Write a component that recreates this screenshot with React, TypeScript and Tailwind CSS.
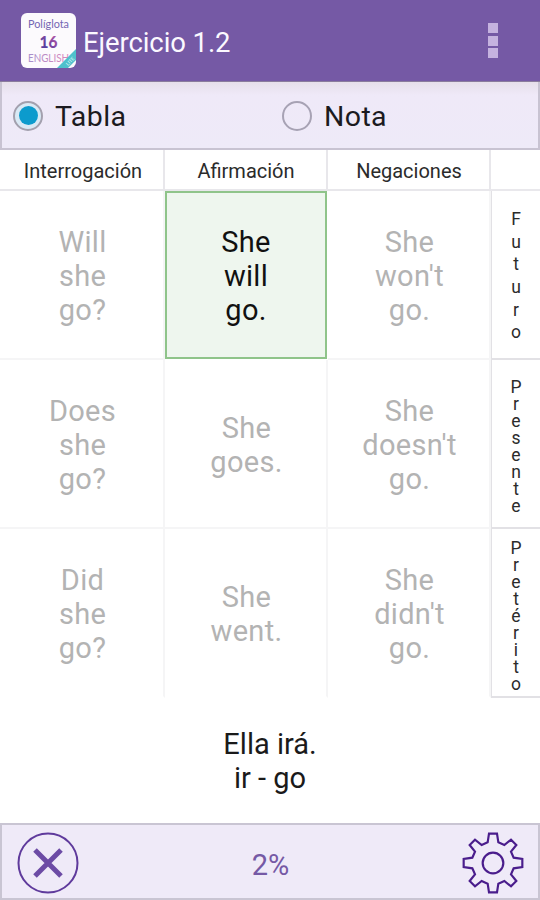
import clsx from 'clsx';

const HEADERS = ['Interrogación', 'Afirmación', 'Negaciones'];

const ROWS = [
  {
    tense: 'Futuro',
    step: 'leading-[22.6px] pt-[3px]',
    cells: [['Will', 'she', 'go?'], ['She', 'will', 'go.'], ['She', "won't", 'go.']],
  },
  {
    tense: 'Presente',
    step: 'leading-[17px] pt-[7px]',
    cells: [['Does', 'she', 'go?'], ['She', 'goes.'], ['She', "doesn't", 'go.']],
  },
  {
    tense: 'Pretérito',
    step: 'leading-[17px] pt-[7px]',
    cells: [['Did', 'she', 'go?'], ['She', 'went.'], ['She', "didn't", 'go.']],
  },
];

function AppLogo() {
  return (
    <svg className="w-[55px] h-[55px]" viewBox="0 0 55 55" fontFamily="Lato, Roboto, sans-serif" aria-hidden="true">
      <defs>
        <linearGradient id="num" x1="0" y1="1" x2="1" y2="0">
          <stop offset="0.3" stopColor="#5a3f9f" />
          <stop offset="1" stopColor="#d05aa8" />
        </linearGradient>
        <linearGradient id="lang" x1="0" x2="1">
          <stop offset="0" stopColor="#a58fcb" />
          <stop offset="1" stopColor="#dc85bb" />
        </linearGradient>
        <clipPath id="tile">
          <rect width="55" height="55" rx="6" />
        </clipPath>
      </defs>
      <g clipPath="url(#tile)">
        <rect width="55" height="55" fill="#fcfafd" />
        <text x="27.5" y="14.5" fontSize="11" textAnchor="middle" textLength="41" lengthAdjust="spacingAndGlyphs" fill="#7466b3">Políglota</text>
        <text x="27.5" y="34.5" fontSize="17" fontWeight="900" textAnchor="middle" textLength="18" lengthAdjust="spacingAndGlyphs" fill="url(#num)">16</text>
        <text x="27.5" y="49" fontSize="12" textAnchor="middle" textLength="41" lengthAdjust="spacingAndGlyphs" fill="url(#lang)">ENGLISH</text>
        <path d="M36 55 L55 36 V47 L47 55 Z" fill="#4fc0cc" />
        <text x="49" y="50" fontSize="5" textAnchor="middle" transform="rotate(-45 49 48)" fill="#d9f5f7">LITE</text>
      </g>
    </svg>
  );
}

function Radio({ label, checked }: { label: string; checked?: boolean }) {
  return (
    <label className="flex w-[269px] shrink-0 items-center">
      <span
        className={clsx(
          'flex h-[30px] w-[30px] items-center justify-center rounded-full border-2',
          checked ? 'border-[#a3a0ae] bg-[#d9e9f5]' : 'border-[#a7a2b4]'
        )}
      >
        {checked && <span className="h-[19px] w-[19px] rounded-full bg-[#0c9bcd]" />}
      </span>
      <span className="ml-3 pt-[3px] text-[28.5px] leading-none tracking-[0.4px] text-[#1b1a20]">{label}</span>
    </label>
  );
}

function CloseIcon() {
  return (
    <svg className="w-[62px] h-[62px]" viewBox="0 0 62 62" fill="none">
      <circle cx="31" cy="31" r="29.5" stroke="#5f3a9c" strokeWidth="2" />
      <path d="M18 18 L44 44 M44 18 L18 44" stroke="#6c4ba5" strokeWidth="5" />
    </svg>
  );
}

function GearIcon() {
  return (
    <svg className="w-[62px] h-[62px]" viewBox="-93 -93 186 186" fill="none" stroke="#4a1d8c" strokeWidth="6.5">
      <path d="M-12 -88 L12 -88 L16 -62 L34 -54 L54 -70 L70 -54 L54 -34 L62 -16 L88 -12 L88 12 L62 16 L54 34 L70 54 L54 70 L34 54 L16 62 L12 88 L-12 88 L-16 62 L-34 54 L-54 70 L-70 54 L-54 34 L-62 16 L-88 12 L-88 -12 L-62 -16 L-54 -34 L-70 -54 L-54 -70 L-34 -54 L-16 -62 Z" />
      <circle r="31" />
    </svg>
  );
}

export default function App() {
  return (
    <div className="flex h-[900px] w-[540px] flex-col overflow-hidden bg-white font-[Roboto,sans-serif]">
      {/* Action bar */}
      <header className="flex h-[82px] shrink-0 items-center border-b border-[#8a7c9c] bg-[#7559a5] pl-[21px] pr-[42px]">
        <AppLogo />
        <h1 className="ml-[7px] flex-1 pt-[4px] text-[27.5px] leading-none tracking-[-0.1px] text-[#fbf8ff]">Ejercicio 1.2</h1>
        <button className="flex flex-col gap-[2.5px]" aria-label="Menú">
          <span className="h-[10px] w-[10px] bg-[#c5b2df]" />
          <span className="h-[10px] w-[10px] bg-[#c5b2df]" />
          <span className="h-[10px] w-[10px] bg-[#c5b2df]" />
        </button>
      </header>

      {/* Mode */}
      <div className="flex h-[68px] shrink-0 items-center overflow-hidden border-x-2 border-b-2 border-[#c8c3d2] bg-linear-to-b from-[#e6dfea] via-[#efe9f8] via-20% to-[#eeeaf8] pl-[11px] pt-px">
        <Radio label="Tabla" checked />
        <Radio label="Nota" />
      </div>

      {/* Table */}
      <div className="grid shrink-0 grid-cols-[165px_163px_163px_49px] grid-rows-[41px_169px_169px_169px]">
        {HEADERS.map((h) => (
          <div key={h} className="flex items-center justify-center border-b-2 border-r-2 border-[#e8e7eb] pl-px pt-[3px] text-[20px] text-[#2b2b2b] first:pl-[3px]">
            {h}
          </div>
        ))}
        <div className="border-b-2 border-[#e9e8ec]" />

        {ROWS.map((row, r) => [
          ...row.cells.map((lines, c) => {
            const active = r === 0 && c === 1;
            return (
              <div
                key={`${row.tense}-${c}`}
                className={clsx(
                  'flex flex-col items-center justify-center text-[29px] leading-[34px] tracking-[0.3px]',
                  active
                    ? 'mb-px mr-px border-2 border-[#8fc48a] bg-[#eef6ee] pt-px text-[#111]'
                    : 'border-b-2 border-r-2 border-[#f5f5f6] pl-[2px] pt-[3px] text-[#b3b3b3]',
                  r === 2 && 'border-b-transparent'
                )}
              >
                {lines.map((line) => (
                  <span key={line}>{line}</span>
                ))}
              </div>
            );
          }),
          <div
            key={row.tense}
            className={clsx(
              'flex flex-col items-center justify-center border-b-2 border-l border-[#e2e1e5] text-[17.5px] text-[#2b2b2b]',
              row.step
            )}
          >
            {row.tense.split('').map((ch, i) => (
              <span key={i}>{ch}</span>
            ))}
          </div>,
        ])}
      </div>

      {/* Translation */}
      <div className="flex flex-1 flex-col items-center justify-center text-[29px] leading-[34px] text-[#1a1a1a]">
        <p>Ella irá.</p>
        <p>ir - go</p>
      </div>

      {/* Footer */}
      <footer className="flex h-[77px] shrink-0 items-center justify-between border-2 border-[#c9c5d3] bg-[#efeaf8] pl-[15px] pr-[14px] pt-[3px]">
        <button aria-label="Cerrar"><CloseIcon /></button>
        <span className="pt-[5px] text-[29px] leading-none text-[#7559a5]">2%</span>
        <button aria-label="Ajustes"><GearIcon /></button>
      </footer>
    </div>
  );
}
